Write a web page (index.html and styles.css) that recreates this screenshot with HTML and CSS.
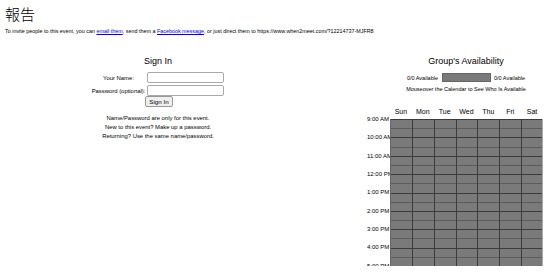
FILE: index.html
```html
<!DOCTYPE html>
<html lang="ja">
<head>
    <meta charset="UTF-8">
    <meta name="viewport" content="width=device-width, initial-scale=1.0">
    <title>報告 - When2meet</title>
    <link rel="stylesheet" href="styles.css">
</head>
<body>
    <div id="header">
        <h1 id="event-name">報告</h1>
        <p id="invite">To invite people to this event, you can <a href="#">email them</a>, send them a <a href="#">Facebook message</a>, or just direct them to https://www.when2meet.com/?12214737-MJFR8</p>
    </div>

    <div id="main">
        <div id="sign-in">
            <h2>Sign In</h2>
            <div class="signin-form">
                <label for="name">Your Name:</label>
                <input type="text" id="name">
                <label for="password">Password (optional):</label>
                <input type="password" id="password">
                <button class="signin-btn">Sign In</button>
            </div>
            <div class="signin-info">
                Name/Password are only for this event.<br>
                New to this event? Make up a password.<br>
                Returning? Use the same name/password.
            </div>
        </div>

        <div id="group-grid">
            <h2>Group's Availability</h2>
            <div class="legend">
                <span>0/0 Available</span>
                <span class="legend-bar"></span>
                <span>0/0 Available</span>
            </div>
            <div class="hint">Mouseover the Calendar to See Who Is Available</div>

            <div class="schedule">
                <div class="days">
                    <div>Sun</div>
                    <div>Mon</div>
                    <div>Tue</div>
                    <div>Wed</div>
                    <div>Thu</div>
                    <div>Fri</div>
                    <div>Sat</div>
                </div>
                <div class="times">
                    <div>9:00 AM</div>
                    <div>10:00 AM</div>
                    <div>11:00 AM</div>
                    <div>12:00 PM</div>
                    <div>1:00 PM</div>
                    <div>2:00 PM</div>
                    <div>3:00 PM</div>
                    <div>4:00 PM</div>
                    <div>5:00 PM</div>
                </div>
                <!-- one column per day, slot lines drawn by the background -->
                <div class="slots">
                    <div class="day-col"></div>
                    <div class="day-col"></div>
                    <div class="day-col"></div>
                    <div class="day-col"></div>
                    <div class="day-col"></div>
                    <div class="day-col"></div>
                    <div class="day-col"></div>
                </div>
            </div>
        </div>
    </div>
</body>
</html>
```

FILE: styles.css
```css
body {
    margin: 0;
    padding: 0;
    overflow: hidden;
    font-family: "Liberation Sans", Arial, "Noto Sans CJK JP", sans-serif;
    color: #000;
    background: #fff;
}

#header {
    padding: 4px 0 0 5px;
}

#event-name {
    margin: 0;
    font-size: 15px;
    line-height: 20px;
    font-weight: 300;
    font-family: "Noto Sans CJK JP", sans-serif;
}

#invite {
    margin: 3px 0 0 0;
    font-size: 5.4px;
    line-height: 8px;
}

#invite a {
    color: #00e;
}

#main {
    display: flex;
    margin-top: 20px;
}

h2 {
    margin: 0;
    font-size: 9px;
    line-height: 12px;
    font-weight: normal;
    text-align: center;
}

#sign-in {
    width: 316px;
    text-align: center;
}

.signin-form {
    display: grid;
    grid-template-columns: auto 77px;
    justify-content: center;
    align-items: center;
    column-gap: 2px;
    row-gap: 2px;
    margin-top: 5px;
    font-size: 5.9px;
}

.signin-form input {
    box-sizing: border-box;
    width: 77px;
    height: 11px;
    margin: 0;
    padding: 0 2px;
    border: 1px solid #a9a9a9;
    border-radius: 2px;
    font-size: 6px;
}

.signin-btn {
    grid-column: 2;
    justify-self: start;
    box-sizing: border-box;
    height: 11px;
    margin: -2px 0 0 -2px;
    padding: 0 3px;
    border: 1px solid #999;
    border-radius: 2px;
    background: #efefef;
    font-family: inherit;
    font-size: 6.2px;
    line-height: 9px;
}

.signin-info {
    margin-top: 7px;
    font-size: 5.9px;
    line-height: 9px;
}

#group-grid {
    width: 176px;
    margin-left: 51px;
    padding-left: 11px;
    text-align: center;
}

.legend {
    display: flex;
    justify-content: center;
    align-items: center;
    gap: 3px;
    margin-top: 6px;
    height: 9px;
    font-size: 5.5px;
}

.legend-bar {
    box-sizing: border-box;
    width: 49px;
    height: 9px;
    margin-left: 1px;
    background: #7a7a7a;
    border: 1px solid #666;
}

.hint {
    margin-top: 3px;
    font-size: 5.5px;
    line-height: 8px;
}

.schedule {
    display: grid;
    grid-template-columns: 23px 153px;
    grid-template-rows: 12px 147px;
    margin: 14px 0 0 -11px;
    text-align: left;
}

.days {
    grid-column: 2;
    grid-row: 1;
    display: grid;
    grid-template-columns: repeat(7, 1fr);
    font-size: 7px;
    line-height: 10px;
    text-align: center;
}

.times {
    grid-column: 1;
    grid-row: 2;
    margin-top: -9.2px;
    font-size: 6px;
    white-space: nowrap;
}

.times div {
    height: 18.375px;
    line-height: 18.375px;
}

.slots {
    grid-column: 2;
    grid-row: 2;
    position: relative;
    display: grid;
    grid-template-columns: repeat(7, 1fr);
    background: #7a7a7a;
}

.day-col {
    border-left: 1px solid #3c3c3c;
    background-image: repeating-linear-gradient(
        to bottom,
        #3c3c3c 0, #3c3c3c 1px,
        transparent 1px, transparent 9.19px,
        #5c5c5c 9.19px, #5c5c5c 10.19px,
        transparent 10.19px, transparent 18.375px
    );
}

.day-col:first-child {
    border-left-color: #666;
}

.day-col:last-child {
    border-right: 1px solid #aaa;
}
```
